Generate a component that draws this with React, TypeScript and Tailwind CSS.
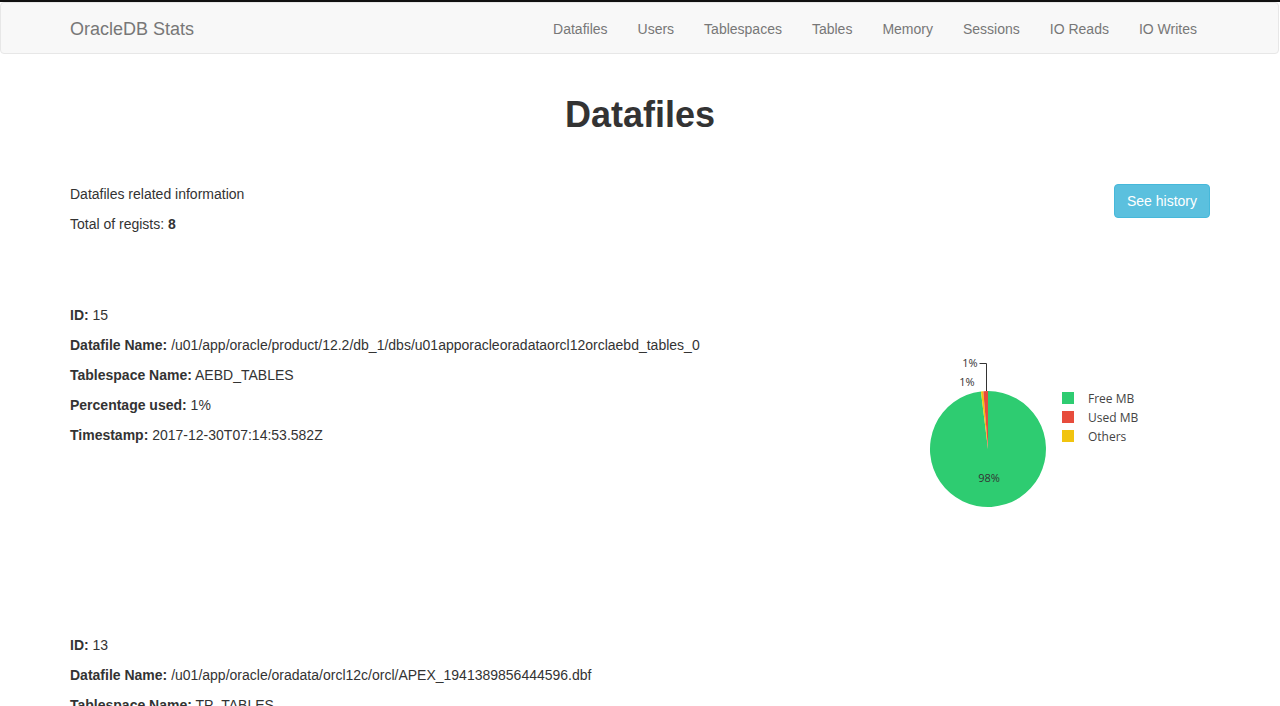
import React from "react";

const links = ["Datafiles", "Users", "Tablespaces", "Tables", "Memory", "Sessions", "IO Reads", "IO Writes"];

function Pie() {
  return (
    <svg width="220" height="170" viewBox="0 0 220 170" className="block">
      <path d="M68,99 L68,41 A58,58 0 1 1 60.93,41.43 Z" fill="#2ecc71" />
      <path d="M68,99 L60.93,41.43 A58,58 0 0 1 63.35,41.19 Z" fill="#f1c40f" />
      <path d="M68,99 L63.35,41.19 A58,58 0 0 1 68,41 Z" fill="#e74c3c" />
      <polyline points="59.5,13.5 66.5,13.5 66.5,41" fill="none" stroke="#333" strokeWidth="1" />
      <g fontFamily="'Open Sans', sans-serif" fontSize="11" fill="#333">
        <text x="50" y="17" textAnchor="middle">1%</text>
        <text x="47" y="36" textAnchor="middle">1%</text>
        <text x="69" y="132" textAnchor="middle">98%</text>
      </g>
      <rect x="142" y="42" width="12" height="12" fill="#2ecc71" />
      <rect x="142" y="61" width="12" height="12" fill="#e74c3c" />
      <rect x="142" y="80" width="12" height="12" fill="#f1c40f" />
      <g fontFamily="'Open Sans', sans-serif" fontSize="12" fill="#444">
        <text x="168" y="53">Free MB</text>
        <text x="168" y="72">Used MB</text>
        <text x="168" y="91">Others</text>
      </g>
    </svg>
  );
}

function Field({ label, value }: { label: string; value: string }) {
  return (
    <p className="h-[30px] leading-[20px] whitespace-nowrap">
      <b className="font-bold">{label}</b> {value}
    </p>
  );
}

function Entry({ id, name, ts, tsName, pct, chart }: { id: string; name: string; ts: string; tsName: string; pct: string; chart?: boolean }) {
  return (
    <div className="flex h-[330px]">
      <div className="w-[850px]">
        <Field label="ID:" value={id} />
        <Field label="Datafile Name:" value={name} />
        <Field label="Tablespace Name:" value={tsName} />
        <Field label="Percentage used:" value={pct} />
        <Field label="Timestamp:" value={ts} />
      </div>
      {chart && (
        <div className="pt-[45px]">
          <Pie />
        </div>
      )}
    </div>
  );
}

export default function App() {
  return (
    <div
      className="h-[706px] overflow-hidden bg-white text-[14px] text-[#333]"
      style={{ fontFamily: "'Liberation Sans', Arial, sans-serif" }}
    >
      <div className="h-[2px] bg-[#111]" />
      <nav className="h-[52px] bg-[#f8f8f8] border border-[#e7e7e7] rounded-[4px] mr-[1px]">
        <div className="flex items-center h-full pt-[2px] pl-[69px] pr-[66px]">
          <span className="text-[18px] text-[#777]">OracleDB Stats</span>
          <div className="ml-auto flex">
            {links.map((l) => (
              <span key={l} className="px-[15px] text-[#777] text-[14px] leading-[20px]">
                {l}
              </span>
            ))}
          </div>
        </div>
      </nav>
      <div className="px-[70px]">
        <h1 className="mt-[41px] text-center text-[36px] leading-[40px] font-bold text-[#333]">Datafiles</h1>
        <div className="mt-[49px] flex justify-between">
          <div>
            <p className="leading-[20px]">Datafiles related information</p>
            <p className="mt-[10px] leading-[20px]">
              Total of regists: <b>8</b>
            </p>
          </div>
          <button className="h-[34px] px-[12px] rounded-[4px] bg-[#5bc0de] border border-[#46b8da] text-white text-[14px]">
            See history
          </button>
        </div>
        <div className="mt-[71px]">
          <Entry
            id="15"
            name="/u01/app/oracle/product/12.2/db_1/dbs/u01apporacleoradataorcl12orclaebd_tables_0"
            tsName="AEBD_TABLES"
            pct="1%"
            ts="2017-12-30T07:14:53.582Z"
            chart
          />
          <Entry
            id="13"
            name="/u01/app/oracle/oradata/orcl12c/orcl/APEX_1941389856444596.dbf"
            tsName="TP_TABLES"
            pct="1%"
            ts="2017-12-30T07:14:53.582Z"
          />
        </div>
      </div>
    </div>
  );
}
